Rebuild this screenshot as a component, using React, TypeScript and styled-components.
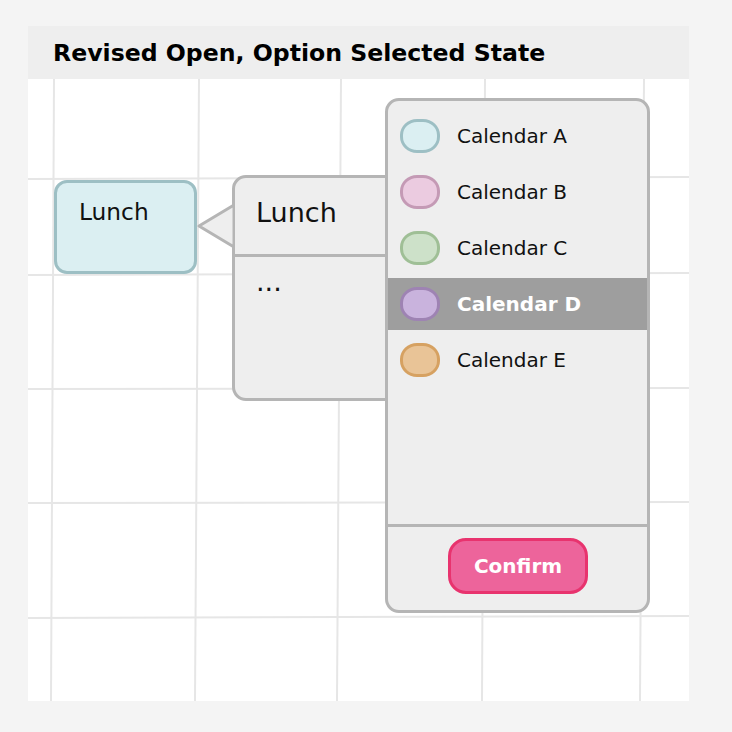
import React from "react";
import styled, { createGlobalStyle } from "styled-components";

const GlobalStyle = createGlobalStyle`
  html, body {
    margin: 0;
    padding: 0;
    background: #f4f4f4;
    font-family: "DejaVu Sans", Verdana, sans-serif;
    color: #111111;
  }
`;

const calendars = [
  { name: "Calendar A", fill: "#dbeff2", stroke: "#9dbfc4" },
  { name: "Calendar B", fill: "#ebcbe0", stroke: "#c49ab5" },
  { name: "Calendar C", fill: "#cde1c9", stroke: "#9fbf96" },
  { name: "Calendar D", fill: "#c9b3dd", stroke: "#9e83b3" },
  { name: "Calendar E", fill: "#e9c497", stroke: "#d6a161" },
];

const SELECTED = "Calendar D";

// hand-drawn grid, slightly off square like the sketch
const vLines = [
  [26, 23],
  [171, 167],
  [313, 309],
  [457, 454],
  [616, 612],
];
const hLines = [
  [100, 98],
  [196, 194],
  [310, 309],
  [424, 423],
  [539, 537],
];

const Grid = () => (
  <GridSvg width="661" height="622" viewBox="0 0 661 622">
    {vLines.map(([a, b], i) => (
      <line key={"v" + i} x1={a} y1={0} x2={b} y2={622} />
    ))}
    {hLines.map(([a, b], i) => (
      <line key={"h" + i} x1={0} y1={a} x2={661} y2={b} />
    ))}
  </GridSvg>
);

const App = () => {
  return (
    <Page>
      <GlobalStyle />
      <Card>
        <Header>Revised Open, Option Selected State</Header>
        <Canvas>
          <Grid />
          <EventBlock>Lunch</EventBlock>
          <Popover>
            <Arrow width="38" height="46" viewBox="0 0 38 46">
              <polygon points="2,23 37,2 37,44" />
            </Arrow>
            <PopoverTitle>Lunch</PopoverTitle>
            <PopoverBody>...</PopoverBody>
          </Popover>
          <Dropdown>
            <OptionList>
              {calendars.map((c) => (
                <Option key={c.name} selected={c.name === SELECTED}>
                  <Swatch fill={c.fill} stroke={c.stroke} />
                  <OptionLabel selected={c.name === SELECTED}>
                    {c.name}
                  </OptionLabel>
                </Option>
              ))}
            </OptionList>
            <Footer>
              <ConfirmButton>Confirm</ConfirmButton>
            </Footer>
          </Dropdown>
        </Canvas>
      </Card>
    </Page>
  );
};

const Page = styled.div`
  padding: 26px 0 0 28px;
`;

const Card = styled.div`
  width: 661px;
  height: 675px;
  background: #ffffff;
  display: flex;
  flex-direction: column;
`;

const Header = styled.div`
  height: 53px;
  box-sizing: border-box;
  padding: 2px 0 0 25px;
  background: #eeeeee;
  display: flex;
  align-items: center;
  font-size: 23.6px;
  font-weight: bold;
  color: #000000;
  line-height: 1.2;
`;

const Canvas = styled.div`
  position: relative;
  flex: 1;
  overflow: hidden;
  display: flex;
  align-items: flex-start;
  padding-left: 26px;
`;

const GridSvg = styled.svg`
  position: absolute;
  left: 0;
  top: 0;
  z-index: 0;

  line {
    stroke: #e6e6e6;
    stroke-width: 2;
  }
`;

const EventBlock = styled.div`
  position: relative;
  z-index: 1;
  margin-top: 101px;
  width: 143px;
  height: 94px;
  box-sizing: border-box;
  padding: 15px 0 0 22px;
  background: #dbeff2;
  border: 3px solid #9dbfc4;
  border-radius: 13px;
  font-size: 23.3px;
  line-height: 1.2;
`;

const Popover = styled.div`
  position: relative;
  z-index: 2;
  margin: 96px 0 0 35px;
  width: 175px;
  height: 226px;
  box-sizing: border-box;
  background: #eeeeee;
  border: 3px solid #b5b5b5;
  border-radius: 14px;
  display: flex;
  flex-direction: column;
`;

const Arrow = styled.svg`
  position: absolute;
  left: -38px;
  top: 25px;

  polygon {
    fill: #eeeeee;
    stroke: #b5b5b5;
    stroke-width: 3;
    stroke-linejoin: round;
  }
`;

const PopoverTitle = styled.div`
  height: 79px;
  box-sizing: border-box;
  padding: 19px 0 0 21px;
  border-bottom: 3px solid #b5b5b5;
  font-size: 27px;
  line-height: 1.2;
  white-space: nowrap;
`;

const PopoverBody = styled.div`
  padding: 9px 0 0 21px;
  font-size: 27px;
  line-height: 1.2;
`;

const Dropdown = styled.div`
  position: relative;
  z-index: 3;
  margin: 19px 0 0 -22px;
  width: 265px;
  height: 515px;
  box-sizing: border-box;
  background: #eeeeee;
  border: 3px solid #b5b5b5;
  border-radius: 14px;
  display: flex;
  flex-direction: column;
`;

const OptionList = styled.div`
  flex: 1;
  padding-top: 9px;
  display: flex;
  flex-direction: column;
  gap: 4px;
  border-bottom: 3px solid #b5b5b5;
`;

const Option = styled.div<{ selected?: boolean }>`
  height: 52px;
  display: flex;
  align-items: center;
  gap: 17px;
  padding-left: 12px;
  background: ${(p) => (p.selected ? "#9e9e9e" : "transparent")};
`;

const Swatch = styled.span<{ fill: string; stroke: string }>`
  width: 40px;
  height: 34px;
  box-sizing: border-box;
  border-radius: 17px / 16px;
  background: ${(p) => p.fill};
  border: 3px solid ${(p) => p.stroke};
  flex-shrink: 0;
`;

const OptionLabel = styled.span<{ selected?: boolean }>`
  font-size: 20px;
  line-height: 1.2;
  font-weight: ${(p) => (p.selected ? "bold" : "normal")};
  color: ${(p) => (p.selected ? "#ffffff" : "#111111")};
`;

const Footer = styled.div`
  height: 83px;
  box-sizing: border-box;
  padding: 0 0 5px 1px;
  display: flex;
  align-items: center;
  justify-content: center;
`;

const ConfirmButton = styled.button`
  width: 140px;
  height: 56px;
  box-sizing: border-box;
  background: #ed649b;
  border: 3px solid #e8336e;
  border-radius: 18px;
  color: #ffffff;
  font-family: "DejaVu Sans", Verdana, sans-serif;
  font-size: 20px;
  font-weight: bold;
  padding: 0;
  cursor: pointer;
`;

export default App;
